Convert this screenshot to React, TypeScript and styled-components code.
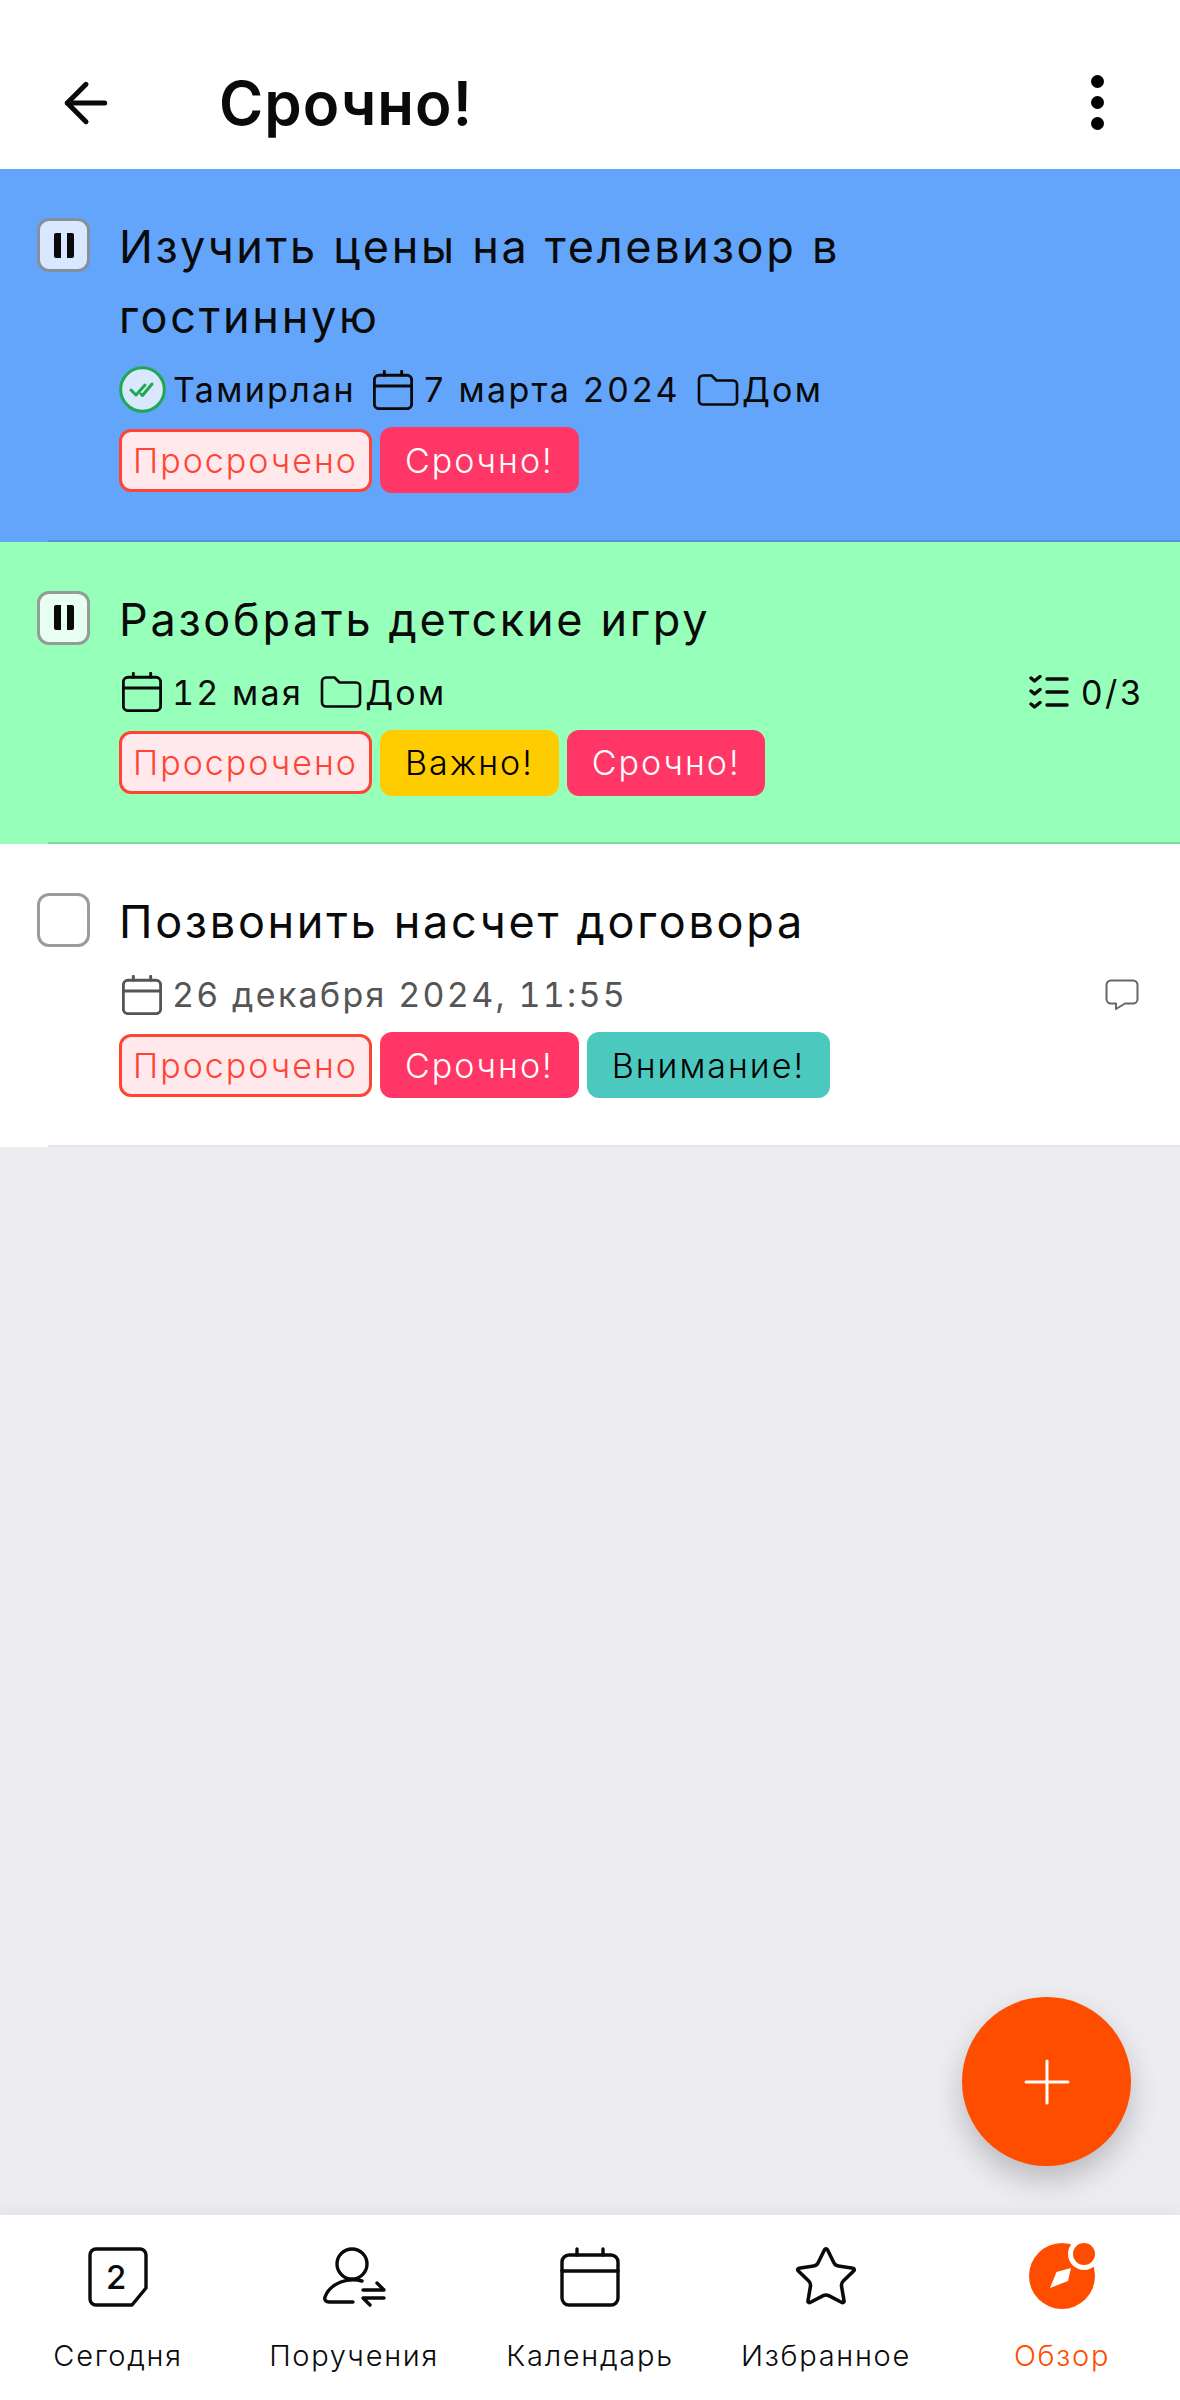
import styled, { createGlobalStyle } from 'styled-components';
import { ArrowLeft, Plus, Star } from 'lucide-react';

type Tone = 'blue' | 'green' | 'white';
type TagKind = 'overdue' | 'urgent' | 'important' | 'attention';

const rowColors: Record<Tone, { bg: string; line: string; box: string; boxLine: string }> = {
	blue: { bg: '#62a5fa', line: '#5a8fe0', box: '#d9e8fe', boxLine: '#868f9e' },
	green: { bg: '#96ffb9', line: '#7fdc9d', box: '#e6fff0', boxLine: '#959c97' },
	white: { bg: '#ffffff', line: '#e6e6ea', box: '#ffffff', boxLine: '#9c9c9c' },
};

const tagColors: Record<TagKind, { bg: string; color: string }> = {
	overdue: { bg: '#ffe9ec', color: '#ff4433' },
	urgent: { bg: '#ff3666', color: '#ffffff' },
	important: { bg: '#ffcc00', color: '#000000' },
	attention: { bg: '#4bc9bf', color: '#000000' },
};

const GlobalStyle = createGlobalStyle`
	* {
		box-sizing: border-box;
	}
	body {
		margin: 0;
		font-family: 'Inter', 'Liberation Sans', sans-serif;
		color: #0a0a0a;
	}
`;

const CalendarIcon = ({ size, stroke }: { size: number; stroke: number }) => (
	<svg width={size} height={size} viewBox='0 0 60 60' fill='none' stroke='currentColor' strokeWidth={stroke} strokeLinecap='round'>
		<rect x='2' y='8' width='56' height='50' rx='7' />
		<path d='M2 24H58M17 2V8M43 2V8' />
	</svg>
);

const FolderIcon = () => (
	<svg width='42' height='34' viewBox='0 0 42 34' fill='none' stroke='currentColor' strokeWidth='2.6' strokeLinejoin='round'>
		<path d='M2 6.5a4 4 0 0 1 4-4h8.5l5 5H36a4 4 0 0 1 4 4V27.5a4 4 0 0 1-4 4H6a4 4 0 0 1-4-4z' />
	</svg>
);

const DoneBadge = () => (
	<svg width='47' height='47' viewBox='0 0 47 47' fill='none' strokeLinecap='round' strokeLinejoin='round'>
		<circle cx='23.5' cy='23.5' r='21.8' fill='#d9e8fe' stroke='#1fa84f' strokeWidth='3' />
		<path d='M12 24l5 5 9-10M22 28l1.5 1.5L33 18' stroke='#1fa84f' strokeWidth='3' />
	</svg>
);

const ChecklistIcon = () => (
	<svg width='40' height='34' viewBox='0 0 40 34' fill='none' stroke='currentColor' strokeWidth='3.4' strokeLinecap='round' strokeLinejoin='round'>
		<path d='M2 3l3.5 3L11 1.5M2 16l3.5 3L11 14.5M2 29l3.5 3L11 27.5' />
		<path d='M18 4H38M18 17H38M18 30H38' />
	</svg>
);

const CommentIcon = () => (
	<svg width='34' height='32' viewBox='0 0 34 32' fill='none' stroke='currentColor' strokeWidth='2' strokeLinejoin='round'>
		<path d='M6 1.5H28a4.5 4.5 0 0 1 4.5 4.5V20a4.5 4.5 0 0 1-4.5 4.5H20l-9 5.5 0-5.5H6A4.5 4.5 0 0 1 1.5 20V6A4.5 4.5 0 0 1 6 1.5z' />
	</svg>
);

const TodayIcon = () => (
	<svg width='60' height='60' viewBox='0 0 60 60' fill='none' stroke='currentColor' strokeWidth='3.4' strokeLinejoin='round'>
		<path d='M8 2H52a6 6 0 0 1 6 6V41L44 58H8a6 6 0 0 1-6-6V8a6 6 0 0 1 6-6z' />
		<text x='29' y='42' textAnchor='middle' fontSize='33' fontWeight='500' fontFamily='Inter, sans-serif' fill='currentColor' stroke='none'>
			2
		</text>
	</svg>
);

const AssignedIcon = () => (
	<svg width='64' height='60' viewBox='0 0 64 60' fill='none' stroke='currentColor' strokeWidth='3.4' strokeLinecap='round' strokeLinejoin='round'>
		<circle cx='30' cy='17' r='15' />
		<path d='M40 34C26 30 8 36 3 50c-1 3 1 5 4 5H31' />
		<path d='M41 43H62L55 36M62 51H41L48 58' />
	</svg>
);

const ExploreIcon = () => (
	<svg width='72' height='72' viewBox='0 0 72 72'>
		<circle cx='36' cy='35' r='33' fill='#ff4d00' />
		<circle cx='58' cy='13' r='16' fill='#ffffff' />
		<circle cx='58' cy='13' r='11' fill='#ff4d00' />
		<path d='M45 27L30.5 31L24 47L42 40z' fill='#ffffff' />
	</svg>
);

const tasks = [
	{
		tone: 'blue' as Tone,
		title: 'Изучить цены на телевизор в гостинную',
		paused: true,
		owner: 'Тамирлан',
		date: '7 марта 2024',
		folder: 'Дом',
		tags: ['overdue', 'urgent'] as TagKind[],
	},
	{
		tone: 'green' as Tone,
		title: 'Разобрать детские игру',
		paused: true,
		date: '12 мая',
		folder: 'Дом',
		steps: '0/3',
		tags: ['overdue', 'important', 'urgent'] as TagKind[],
	},
	{
		tone: 'white' as Tone,
		title: 'Позвонить насчет договора',
		date: '26 декабря 2024, 11:55',
		muted: true,
		comment: true,
		tags: ['overdue', 'urgent', 'attention'] as TagKind[],
	},
];

const tagLabels: Record<TagKind, string> = {
	overdue: 'Просрочено',
	urgent: 'Срочно!',
	important: 'Важно!',
	attention: 'Внимание!',
};

const App = () => {
	return (
		<Screen>
			<GlobalStyle />
			<Header>
				<BackButton>
					<ArrowLeft size={64} strokeWidth={1.9} />
				</BackButton>
				<Title>Срочно!</Title>
				<MenuDots>
					<i />
					<i />
					<i />
				</MenuDots>
			</Header>
			<List>
				{tasks.map((task) => (
					<Row key={task.title} $tone={task.tone}>
						<CheckBox $tone={task.tone}>{task.paused && <PauseMark />}</CheckBox>
						<Body>
							<TaskTitle>{task.title}</TaskTitle>
							<Meta $muted={task.muted}>
								{task.owner && (
									<MetaItem $gap={7}>
										<DoneBadge />
										{task.owner}
									</MetaItem>
								)}
								<MetaItem $gap={10} $inset={task.owner ? 0 : 3}>
									<CalendarIcon size={40} stroke={4.4} />
									{task.date}
								</MetaItem>
								{task.folder && (
									<MetaItem $gap={3}>
										<FolderIcon />
										{task.folder}
									</MetaItem>
								)}
								{task.steps && (
									<MetaEnd>
										<ChecklistIcon />
										{task.steps}
									</MetaEnd>
								)}
								{task.comment && (
									<CommentSlot>
										<CommentIcon />
									</CommentSlot>
								)}
							</Meta>
							<Tags>
								{task.tags.map((tag) => (
									<Tag key={tag} $kind={tag}>
										{tagLabels[tag]}
									</Tag>
								))}
							</Tags>
						</Body>
					</Row>
				))}
			</List>
			<Fab>
				<Plus size={72} strokeWidth={1} />
			</Fab>
			<BottomNav>
				<NavItem>
					<NavIcon>
						<TodayIcon />
					</NavIcon>
					Сегодня
				</NavItem>
				<NavItem>
					<NavIcon>
						<AssignedIcon />
					</NavIcon>
					Поручения
				</NavItem>
				<NavItem>
					<NavIcon>
						<CalendarIcon size={60} stroke={3.4} />
					</NavIcon>
					Календарь
				</NavItem>
				<NavItem>
					<NavIcon>
						<Star size={68} strokeWidth={1.25} />
					</NavIcon>
					Избранное
				</NavItem>
				<NavItem $active>
					<NavIcon>
						<ExploreIcon />
					</NavIcon>
					Обзор
				</NavItem>
			</BottomNav>
		</Screen>
	);
};

const Screen = styled.div`
	position: relative;
	display: flex;
	flex-direction: column;
	width: 1180px;
	height: 2400px;
	background: #ececf1;
	overflow: hidden;
`;

const Header = styled.header`
	display: flex;
	align-items: center;
	height: 169px;
	padding-top: 36px;
	background: #ffffff;
`;

const BackButton = styled.div`
	display: flex;
	align-items: center;
	justify-content: center;
	width: 172px;
`;

const Title = styled.h1`
	flex: 1;
	margin: 0 0 0 47px;
	font-family: 'Inter', 'Liberation Sans', sans-serif;
	font-size: 60px;
	font-weight: 600;
	line-height: 70px;
	letter-spacing: 1px;
`;

const MenuDots = styled.div`
	display: flex;
	flex-direction: column;
	gap: 8px;
	margin-right: 76px;

	i {
		display: block;
		width: 13px;
		height: 13px;
		border-radius: 50%;
		background: #000000;
	}
`;

const List = styled.main`
	flex: 1;
`;

const Row = styled.article<{ $tone: Tone }>`
	position: relative;
	display: flex;
	padding: 43px 0 48.5px 37px;
	background: ${({ $tone }) => rowColors[$tone].bg};

	&::after {
		content: '';
		position: absolute;
		left: 48px;
		right: 0;
		bottom: 0;
		height: 2px;
		background: ${({ $tone }) => rowColors[$tone].line};
	}
`;

const CheckBox = styled.div<{ $tone: Tone }>`
	display: flex;
	align-items: center;
	justify-content: center;
	flex-shrink: 0;
	width: 53px;
	height: 54px;
	margin-top: 6px;
	border: 3px solid ${({ $tone }) => rowColors[$tone].boxLine};
	border-radius: 12px;
	background: ${({ $tone }) => rowColors[$tone].box};
`;

const PauseMark = styled.span`
	width: 20px;
	height: 25px;
	border-left: 7px solid #0a0a0a;
	border-right: 7px solid #0a0a0a;
	border-radius: 2px;
`;

const Body = styled.div`
	flex: 1;
	min-width: 0;
	margin-left: 29px;
`;

const TaskTitle = styled.h2`
	max-width: 800px;
	margin: 0;
	font-size: 45px;
	font-weight: 400;
	line-height: 70px;
	letter-spacing: 2.7px;
`;

const Meta = styled.div<{ $muted?: boolean }>`
	display: flex;
	align-items: center;
	gap: 17px;
	height: 47px;
	margin-top: 14px;
	padding-right: 36px;
	font-size: 34px;
	font-weight: 400;
	font-variant-numeric: tabular-nums;
	letter-spacing: 2.3px;
	color: ${({ $muted }) => ($muted ? '#555555' : '#0a0a0a')};
`;

const MetaItem = styled.span<{ $gap: number; $inset?: number }>`
	display: flex;
	align-items: center;
	gap: ${({ $gap }) => $gap}px;
	margin-left: ${({ $inset }) => $inset ?? 0}px;
`;

const MetaEnd = styled.span`
	display: flex;
	align-items: center;
	gap: 12px;
	margin-left: auto;
	color: #0a0a0a;
`;

const CommentSlot = styled.span`
	display: flex;
	margin-left: auto;
	margin-right: 5px;
	color: #666666;
`;

const Tags = styled.div`
	display: flex;
	align-items: center;
	gap: 8px;
	margin-top: 14px;
`;

const Tag = styled.span<{ $kind: TagKind }>`
	display: flex;
	align-items: center;
	height: ${({ $kind }) => ($kind === 'overdue' ? 63 : 66)}px;
	padding: 0 ${({ $kind }) => ($kind === 'overdue' ? 11 : 25)}px;
	border: ${({ $kind }) => ($kind === 'overdue' ? '3px solid #ff4433' : 'none')};
	border-radius: 12px;
	background: ${({ $kind }) => tagColors[$kind].bg};
	color: ${({ $kind }) => tagColors[$kind].color};
	font-size: 34px;
	font-weight: 300;
	letter-spacing: 2px;
`;

const Fab = styled.div`
	position: absolute;
	right: 49px;
	bottom: 234px;
	display: flex;
	align-items: center;
	justify-content: center;
	width: 169px;
	height: 169px;
	border-radius: 50%;
	background: #ff4d00;
	color: #ffffff;
	box-shadow: 0 14px 28px rgba(60, 60, 70, 0.28);
`;

const BottomNav = styled.nav`
	position: relative;
	display: grid;
	grid-template-columns: repeat(5, 1fr);
	height: 185px;
	background: #ffffff;
	box-shadow: 0 -4px 14px rgba(60, 60, 70, 0.06);
`;

const NavItem = styled.div<{ $active?: boolean }>`
	display: flex;
	flex-direction: column;
	align-items: center;
	padding-top: 32px;
	font-size: 29px;
	font-weight: 300;
	line-height: 36px;
	letter-spacing: 1.7px;
	color: ${({ $active }) => ($active ? '#ff4d00' : '#0a0a0a')};
`;

const NavIcon = styled.div`
	display: flex;
	align-items: center;
	justify-content: center;
	height: 60px;
	margin-bottom: 31px;
	color: #0a0a0a;
`;

export default App;
